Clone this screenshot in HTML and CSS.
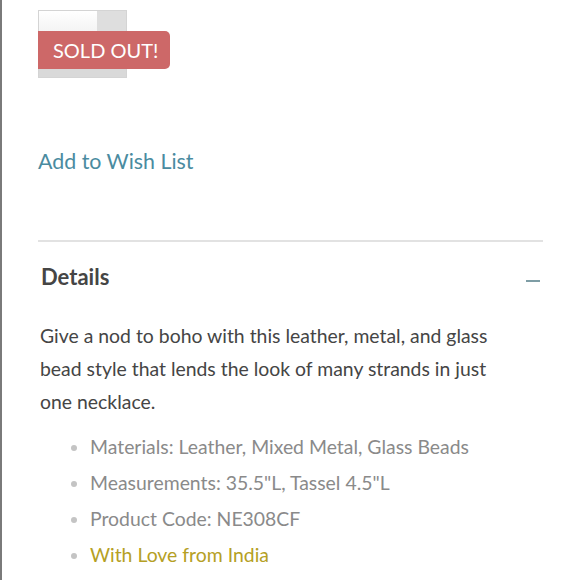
FILE: index.html
```html
<!DOCTYPE html>
<html>
<head>
<meta charset="utf-8">
<link rel="stylesheet" href="styles.css">
</head>
<body>
<div class="page">
  <div class="thumb-wrap">
    <div class="thumb">
      <div class="thumb-top">
        <div class="thumb-a"></div>
        <div class="thumb-b"></div>
      </div>
    </div>
    <div class="badge">SOLD OUT!</div>
  </div>
  <a class="wish" href="#">Add to Wish List</a>
  <div class="divider"></div>
  <div class="details-head">
    <h2 class="details-title">Details</h2>
    <span class="minus"></span>
  </div>
  <p class="desc">Give a nod to boho with this leather, metal, and glass bead style that lends the look of many strands in just one necklace.</p>
  <ul class="specs">
    <li>Materials: Leather, Mixed Metal, Glass Beads</li>
    <li>Measurements: 35.5"L, Tassel 4.5"L</li>
    <li>Product Code: NE308CF</li>
    <li class="love">With Love from India</li>
  </ul>
</div>
</body>
</html>
```
FILE: styles.css
```css
html, body {
  margin: 0;
  padding: 0;
  background: #fff;
}
body {
  font-family: Lato, "Open Sans", sans-serif;
  border-left: 2px solid #7a7a7a;
  min-height: 580px;
  box-sizing: border-box;
}
.page {
  padding: 10px 37px 0 36px;
}
.thumb-wrap {
  position: relative;
  height: 68px;
}
.thumb {
  width: 87px;
  height: 66px;
  border: 1px solid #d4d4d4;
  background: #d9d9d9;
}
.thumb-top {
  display: flex;
  height: 22px;
}
.thumb-a {
  width: 58px;
  background: linear-gradient(#fff, #f3f3f3);
}
.thumb-b {
  flex: 1;
  background: #dedede;
}
.badge {
  position: absolute;
  left: 0;
  top: 21px;
  width: 132px;
  height: 38px;
  box-sizing: border-box;
  background: #cd6868;
  color: #fff;
  font-size: 20px;
  line-height: 38px;
  padding-left: 15px;
  border-radius: 0 5px 5px 0;
}
.wish {
  display: block;
  margin-top: 70px;
  color: #4a8ba0;
  font-size: 21.4px;
  text-decoration: none;
  line-height: 26px;
}
.divider {
  margin-top: 66px;
  height: 2px;
  background: #e2e2e2;
}
.details-head {
  display: flex;
  justify-content: space-between;
  align-items: center;
  margin-top: 21px;
  padding: 0 3px;
}
.details-title {
  margin: 0;
  font-size: 22px;
  font-weight: bold;
  color: #454545;
  line-height: 28px;
}
.minus {
  width: 14px;
  height: 2px;
  background: #7e9da5;
  margin-top: 8px;
}
.desc {
  margin: 28px 20px 0 2px;
  font-size: 19.4px;
  line-height: 33px;
  color: #454545;
}
.specs {
  margin: 11px 0 0 0;
  padding: 0 0 0 52px;
  font-size: 19.4px;
  line-height: 36px;
  color: #8a8a8a;
}
.specs li::marker {
  color: #c4c4c4;
}
.specs .love {
  color: #b5a024;
}
```
